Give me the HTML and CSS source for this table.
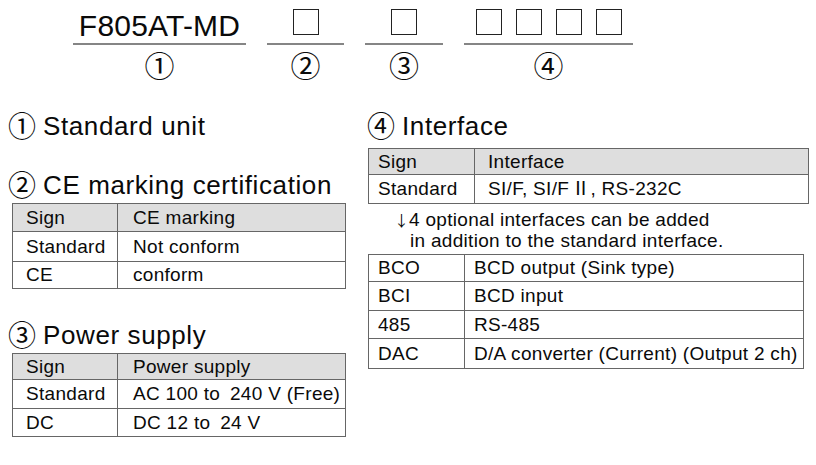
FILE: index.html
```html
<!DOCTYPE html>
<html>
<head>
<meta charset="utf-8">
<link rel="stylesheet" href="styles.css">
</head>
<body>
<div class="code">
  <div class="grp g1"><div class="top"><span class="model">F805AT-MD</span></div><div class="num">①</div></div>
  <div class="grp g2"><div class="top"><span class="box"></span></div><div class="num">②</div></div>
  <div class="grp g3"><div class="top"><span class="box"></span></div><div class="num">③</div></div>
  <div class="grp g4"><div class="top"><span class="box"></span><span class="box"></span><span class="box"></span><span class="box"></span></div><div class="num">④</div></div>
</div>
<div class="cols">
  <div class="col left">
    <h2 class="h h-first"><span class="cn">①</span>Standard unit</h2>
    <h2 class="h h-second"><span class="cn">②</span>CE marking certification</h2>
    <table class="t t-left">
      <colgroup><col class="c-sign"><col></colgroup>
      <tr class="head r28"><td>Sign</td><td class="v">CE marking</td></tr>
      <tr class="r30"><td>Standard</td><td class="v">Not conform</td></tr>
      <tr class="r27"><td>CE</td><td class="v">conform</td></tr>
    </table>
    <h2 class="h h-third"><span class="cn">③</span>Power supply</h2>
    <table class="t t-left">
      <colgroup><col class="c-sign"><col></colgroup>
      <tr class="head r26"><td>Sign</td><td class="v">Power supply</td></tr>
      <tr class="r29"><td>Standard</td><td class="v">AC 100 to&ensp;240 V (Free)</td></tr>
      <tr class="r28"><td>DC</td><td class="v">DC 12 to&ensp;24 V</td></tr>
    </table>
  </div>
  <div class="col right">
    <h2 class="h h-first"><span class="cn">④</span>Interface</h2>
    <table class="t t-if">
      <colgroup><col class="c-sign2"><col></colgroup>
      <tr class="head r26"><td>Sign</td><td class="v2">Interface</td></tr>
      <tr class="r29"><td>Standard</td><td class="v2">SI/F, SI/F<span class="roman">Ⅱ</span>, RS-232C</td></tr>
    </table>
    <div class="note">
      <div class="line1"><span class="arrow">↓</span>4 optional interfaces can be added</div>
      <div class="line2">in addition to the standard interface.</div>
    </div>
    <table class="t t-opt">
      <colgroup><col class="c-sign3"><col></colgroup>
      <tr class="r27"><td>BCO</td><td>BCD output (Sink type)</td></tr>
      <tr class="r29"><td>BCI</td><td>BCD input</td></tr>
      <tr class="r28"><td>485</td><td>RS-485</td></tr>
      <tr class="r30"><td>DAC</td><td>D/A converter (Current) (Output 2 ch)</td></tr>
    </table>
  </div>
</div>
</body>
</html>
```

FILE: styles.css
```css
html, body {
  margin: 0;
  padding: 0;
  background: #ffffff;
}
body {
  color: #0a0a0a;
  font-family: "Liberation Sans", Arial, "Noto Sans CJK JP", sans-serif;
  width: 816px;
  height: 465px;
  overflow: hidden;
}

/* ---- model code header ---- */
.code {
  display: flex;
  gap: 21px;
  padding-left: 73px;
}
.grp {
  display: flex;
  flex-direction: column;
  align-items: center;
}
.g1 { width: 173px; }
.g2 { width: 77px; }
.g3 { width: 78px; }
.g4 { width: 169px; }
.top {
  width: 100%;
  height: 43px;
  border-bottom: 2px solid #858585;
  display: flex;
  align-items: flex-end;
  justify-content: center;
  gap: 14px;
}
.model {
  font-size: 30px;
  line-height: 30px;
  margin-bottom: 2px;
  letter-spacing: 0.2px;
}
.box {
  box-sizing: border-box;
  width: 26px;
  height: 26px;
  border: 1.5px solid #222;
  margin-bottom: 8px;
}
.num {
  font-family: "Noto Sans CJK JP", sans-serif;
  font-size: 30px;
  line-height: 30px;
  height: 30px;
  margin-top: 4px;
  margin-bottom: 1px;
}

/* ---- columns ---- */
.cols {
  display: flex;
  padding-left: 12px;
  gap: 22px;
}
.left { width: 334px; }
.right { width: 445px; }

.h {
  margin: 0;
  height: 30px;
  font-weight: normal;
  font-size: 26px;
  line-height: 30px;
  letter-spacing: 0.6px;
  white-space: nowrap;
}
.left .h { margin-left: -4px; }
.right .h { margin-left: -1px; }
.cn {
  font-family: "Noto Sans CJK JP", sans-serif;
  font-size: 28px;
  line-height: 0;
  letter-spacing: 0;
  vertical-align: -2px;
  margin-right: 7px;
}
.h-first { margin-top: 31px; }
.h-second { margin-top: 29px; }
.h-third { margin-top: 31px; }
.left .t { margin-top: 3px; }

/* ---- tables ---- */
.t {
  border-collapse: collapse;
  font-size: 19px;
  letter-spacing: 0.3px;
}
.t td {
  border: 1px solid #666666;
  padding: 0 0 0 13px;
  vertical-align: middle;
  white-space: nowrap;
  line-height: 22px;
}
.head td { background: #dedede; }
.t-left { width: 334px; }
.c-sign { width: 105px; }
.t-left td.v { padding-left: 15px; }

.t-if { width: 441px; margin-top: 7px; }
.c-sign2 { width: 106px; }
.t-if td { padding-left: 9px; }
.t-if td.v2 { padding-left: 13px; }
.roman {
  font-family: "Noto Sans CJK JP", sans-serif;
  line-height: 0;
  margin-left: 2px;
}

.t-opt { width: 436px; }
.c-sign3 { width: 96px; }
.t-opt td { padding-left: 9px; }

.r26 { height: 26px; }
.r27 { height: 27px; }
.r28 { height: 28px; }
.r29 { height: 29px; }
.r30 { height: 30px; }

/* ---- note ---- */
.note {
  font-size: 19px;
  line-height: 21px;
  letter-spacing: 0.3px;
  margin-top: 5px;
  margin-bottom: 3px;
  padding-left: 26px;
}
.note div { height: 21px; }
.arrow {
  font-family: "Noto Sans CJK JP", sans-serif;
  font-size: 15px;
  line-height: 0;
  display: inline-block;
  width: 15px;
}
.line2 { padding-left: 16px; }
```
